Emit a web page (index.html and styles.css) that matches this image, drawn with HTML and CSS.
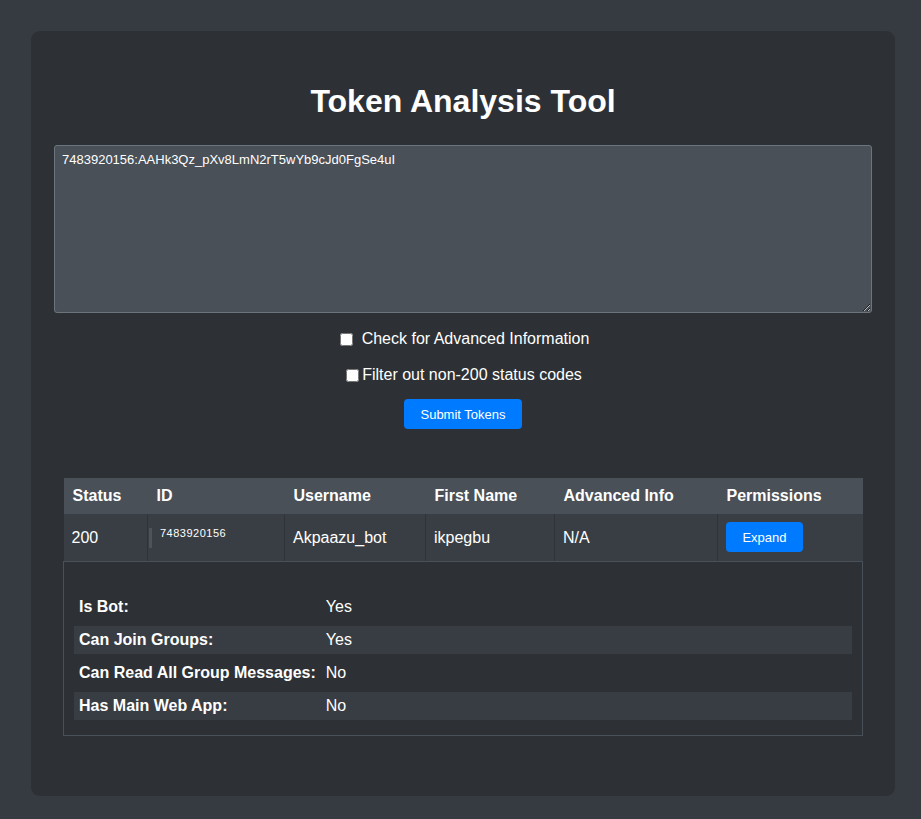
FILE: index.html
```html
<!DOCTYPE html>
<html>
<head>
<meta charset="utf-8">
<title>Token Analysis Tool</title>
<link rel="stylesheet" href="styles.css">
</head>
<body>
<div class="container">
  <h1 class="title">Token Analysis Tool</h1>
  <textarea class="tokens" spellcheck="false">7483920156:AAHk3Qz_pXv8LmN2rT5wYb9cJd0FgSe4uI</textarea>
  <div class="option option-first">
    <input type="checkbox" id="adv"><label for="adv" class="label-wide">Check for Advanced Information</label>
  </div>
  <div class="option option-second">
    <input type="checkbox" id="filt"><label for="filt">Filter out non-200 status codes</label>
  </div>
  <div class="submit-row">
    <button class="btn btn-submit">Submit Tokens</button>
  </div>
  <table class="results">
    <colgroup>
      <col class="c1"><col class="c2"><col class="c3"><col class="c4"><col class="c5"><col class="c6">
    </colgroup>
    <thead>
      <tr>
        <th>Status</th><th>ID</th><th>Username</th><th>First Name</th><th>Advanced Info</th><th>Permissions</th>
      </tr>
    </thead>
    <tbody>
      <tr class="data-row">
        <td>200</td>
        <td class="id-cell"><span class="id-bar"></span><span class="id-text">7483920156</span></td>
        <td>Akpaazu_bot</td>
        <td>ikpegbu</td>
        <td>N/A</td>
        <td class="action-cell"><button class="btn btn-expand">Expand</button></td>
      </tr>
      <tr class="detail-row">
        <td colspan="6" class="detail-cell">
          <table class="perms">
            <tr><td class="k">Is Bot:</td><td class="v">Yes</td></tr>
            <tr class="stripe"><td class="k">Can Join Groups:</td><td class="v">Yes</td></tr>
            <tr><td class="k">Can Read All Group Messages:</td><td class="v">No</td></tr>
            <tr class="stripe"><td class="k">Has Main Web App:</td><td class="v">No</td></tr>
          </table>
        </td>
      </tr>
    </tbody>
  </table>
</div>
</body>
</html>
```

FILE: styles.css
```css
html, body {
  margin: 0;
  padding: 0;
}
body {
  background: #363a41;
  font-family: "Liberation Sans", Arial, sans-serif;
  color: #ffffff;
  padding: 31px 26px 23px 31px;
}
.container {
  width: 864px;
  box-sizing: border-box;
  background: #2d3135;
  border-radius: 9px;
  padding: 52px 23px 60px 23px;
}
.title {
  margin: 0 0 25px 0;
  text-align: center;
  font-size: 32px;
  line-height: 37px;
  font-weight: bold;
}
.tokens {
  display: block;
  width: 818px;
  height: 168px;
  box-sizing: border-box;
  background: #495057;
  border: 1px solid #6c757d;
  border-radius: 3px;
  color: #ffffff;
  font-family: "Liberation Sans", Arial, sans-serif;
  font-size: 13px;
  padding: 6px 7px;
  resize: vertical;
  margin: 0;
}
.option {
  display: flex;
  justify-content: center;
  align-items: center;
  font-size: 16px;
  line-height: 18px;
}
.option input {
  width: 13px;
  height: 13px;
  margin: 0 3px 0 0;
}
.option-first {
  margin-top: 17px;
  padding-left: 3px;
}
.option-first input {
  margin-right: 9px;
}
.option-second {
  margin-top: 18px;
  padding-left: 2px;
}
.submit-row {
  display: flex;
  justify-content: center;
  margin-top: 15px;
}
.btn {
  background: #007bff;
  color: #ffffff;
  border: none;
  border-radius: 4px;
  font-family: "Liberation Sans", Arial, sans-serif;
  font-size: 13px;
  cursor: pointer;
}
.btn-submit {
  width: 118px;
  height: 30px;
  padding: 0;
}
.results {
  margin: 49px auto 0 auto;
  width: 799px;
  border-collapse: collapse;
  table-layout: fixed;
  font-size: 16px;
}
.c1 { width: 84px; }
.c2 { width: 137px; }
.c3 { width: 141px; }
.c4 { width: 129px; }
.c5 { width: 163px; }
.c6 { width: 145px; }
.results th {
  background: #495057;
  text-align: left;
  font-weight: bold;
  padding: 8px 9px;
  height: 36px;
  box-sizing: border-box;
  line-height: 18px;
}
.data-row td {
  background: #393e44;
  padding: 9px 8px 7px 8px;
  height: 47px;
  box-sizing: border-box;
  border-left: 1px solid #2f3338;
  border-bottom: 1px solid #4a5057;
  line-height: 18px;
  vertical-align: middle;
}
.data-row td:first-child {
  border-left: none;
}
.data-row .action-cell {
  padding: 8px 8px;
}
.id-cell {
  position: relative;
}
.id-bar {
  position: absolute;
  left: 1px;
  top: 14px;
  width: 3px;
  height: 20px;
  background: #4d535a;
}
.id-text {
  font-size: 11px;
  letter-spacing: 0.5px;
  margin-left: 4px;
  position: relative;
  top: -6px;
}
.btn-expand {
  display: block;
  width: 77px;
  height: 30px;
  padding: 0;
}
.detail-cell {
  border: 1px solid #4a5057;
  border-top: none;
  padding: 26px 10px 10px 10px;
}
.perms {
  width: 100%;
  border-collapse: separate;
  border-spacing: 0 5px;
  font-size: 16px;
}
.perms td {
  height: 28px;
  box-sizing: border-box;
  padding: 4px 5px;
  line-height: 18px;
  white-space: nowrap;
}
.perms .k {
  font-weight: bold;
  width: 1px;
}
.perms .stripe td {
  background: #383d43;
}
```
